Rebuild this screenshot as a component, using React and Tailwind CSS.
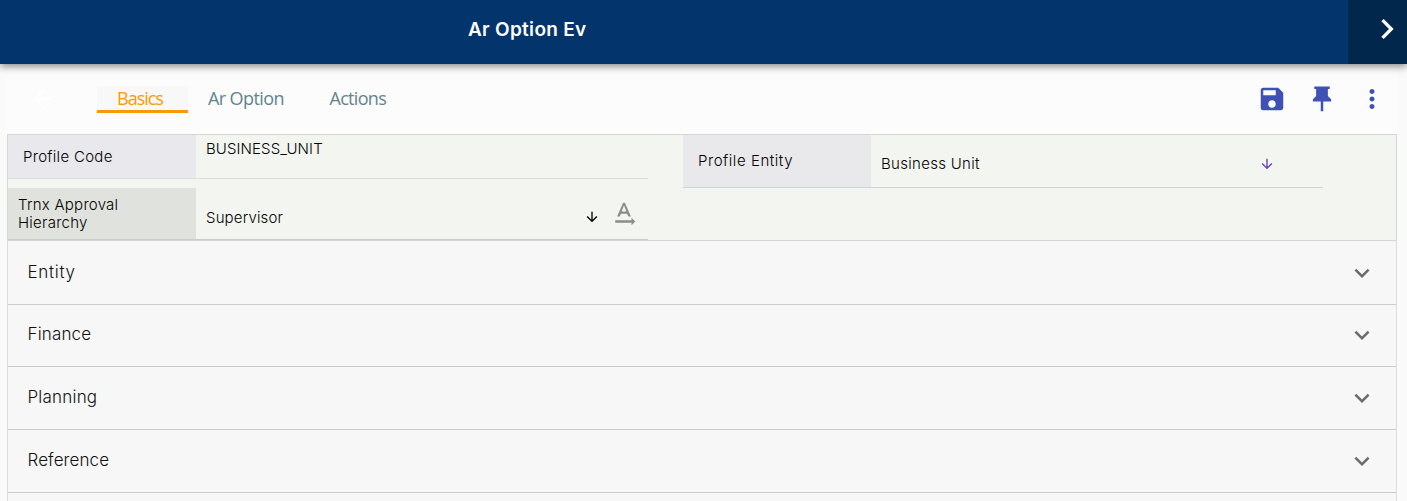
import React from "react";

function Mdi({ d, className }) {
  return (
    <svg viewBox="0 0 24 24" className={className} fill="currentColor">
      <path d={d} />
    </svg>
  );
}

const icons = {
  save: "M17 3H5a2 2 0 0 0-2 2v14a2 2 0 0 0 2 2h14c1.1 0 2-.9 2-2V7l-4-4zm-5 16c-1.66 0-3-1.34-3-3s1.34-3 3-3 3 1.34 3 3-1.34 3-3 3zm3-10H5V5h10v4z",
  pin: "M5.8 2H18.2V4H16.7V9.6L19.3 12.2V14H13V21.8H11V14H4.7V12.2L7.3 9.6V4H5.8z",
  more: "M12 8c1.1 0 2-.9 2-2s-.9-2-2-2-2 .9-2 2 .9 2 2 2zm0 2c-1.1 0-2 .9-2 2s.9 2 2 2 2-.9 2-2-.9-2-2-2zm0 6c-1.1 0-2 .9-2 2s.9 2 2 2 2-.9 2-2-.9-2-2-2z",
  back: "M20 11H7.83l5.59-5.59L12 4l-8 8 8 8 1.41-1.41L7.83 13H20v-2z",
  down: "M20 12l-1.41-1.41L13 16.17V4h-2v12.17l-5.58-5.59L4 12l8 8 8-8z",
  right: "M10 6 8.59 7.41 13.17 12l-4.58 4.59L10 18l6-6z",
  expand: "M16.59 8.59 12 13.17 7.41 8.59 6 10l6 6 6-6z",
  textRotation: "M21 18l-3-3v2H5v2h13v2l3-3zM9.5 11.8h5l.9 2.2h2.1L12.75 3h-1.5L6.5 14h2.1l.9-2.2zM12 4.98L13.87 10h-3.74L12 4.98z",
};

function Section({ title, size, tracking }) {
  return (
    <div className={`${size} flex shrink-0 items-center justify-between border-b border-[#cbcbcb] pl-[19.5px] pr-[19px]`}>
      <span className={`${tracking} text-[17px] font-light text-[#111]`}>{title}</span>
      <Mdi d={icons.expand} className="size-[30px] text-[#6c6c6c]" />
    </div>
  );
}

export default function App() {
  return (
    <div className="flex h-[501px] w-[1407px] flex-col overflow-hidden bg-[#fafafa] font-['Inter','Liberation_Sans',sans-serif] text-black">
      <header className="relative flex h-16 shrink-0 justify-between bg-[#03346c] text-white shadow-[0_2px_8px_rgba(0,0,0,0.5)]">
        <h1 className="pl-[468px] pt-[14px] text-[19px] font-semibold leading-[31px] tracking-[0.3px]">Ar Option Ev</h1>
        <div className="flex w-[59px] justify-end overflow-hidden bg-[#02274d] pt-[9px]">
          <Mdi d={icons.right} className="size-[40px]" />
        </div>
      </header>

      <main className="ml-[7px] flex w-[1390px] grow flex-col">
        <div className="flex h-[70px] shrink-0 items-center bg-[#fcfcfc]">
          <Mdi d={icons.back} className="ml-[21px] size-[30px] text-white" />
          <nav className="ml-[39px] flex font-['Open_Sans','Noto_Sans',sans-serif] text-[18px] leading-[24px] text-[#628391]">
            <span className="h-[27px] w-[91px] border-b-[3px] border-[#ff9800] bg-[#f8f8f8] pl-[20px] tracking-[-1px] text-[#ff9800]">Basics</span>
            <span className="w-[122px] pl-[20px] tracking-[-0.6px]">Ar Option</span>
            <span className="pl-[19.5px] tracking-[-0.7px]">Actions</span>
          </nav>
          <div className="ml-auto flex gap-5 pr-[10px] text-[#3f51b5]">
            <Mdi d={icons.save} className="size-[30px]" />
            <Mdi d={icons.pin} className="size-[30px]" />
            <Mdi d={icons.more} className="size-[30px]" />
          </div>
        </div>

        <section className="flex h-[107px] shrink-0 border border-[#d5d8d2] bg-[#f3f5f0] text-[15px] font-light leading-[18px]">
          <div className="flex w-[640px] flex-col justify-between">
            <div className="flex h-[44px] border-b border-[#d7e0df]">
              <div className="w-[188px] bg-[#e9e8ed] pl-[15px] pt-[13px] tracking-[0.3px]">Profile Code</div>
              <div className="pl-[10px] pt-[5px] tracking-[0.1px]">BUSINESS_UNIT</div>
            </div>
            <div className="flex h-[52px] border-b border-[#c8cfcd]">
              <div className="w-[188px] bg-[#e0e2dd] pl-[10px] pt-[8px] tracking-[0.25px]">Trnx Approval<br />Hierarchy</div>
              <div className="pl-[10px] pt-[21px] tracking-[0.15px]">Supervisor</div>
              <Mdi d={icons.down} className="ml-auto mt-[21px] size-[16px] text-black" />
              <Mdi d={icons.textRotation} className="ml-[9.5px] mr-[9px] mt-[11px] size-[30px] text-[#8b8d89]" />
            </div>
          </div>
          <div className="ml-[35px] flex h-[53px] w-[640px] border-b border-[#ccd6d8]">
            <div className="w-[188px] bg-[#e9e8eb] pl-[15px] pt-[17px] tracking-[0.55px]">Profile Entity</div>
            <div className="pl-[10px] pt-[20px] tracking-[0.3px]">Business Unit</div>
            <Mdi d={icons.down} className="ml-auto mr-[48.5px] mt-[21px] size-[16px] text-[#6a3ac4]" />
          </div>
        </section>

        <div className="flex grow flex-col border-x border-[#dddddd] bg-[#f7f7f7]">
          <Section title="Entity" size="h-[64px]" tracking="tracking-[0.7px]" />
          <Section title="Finance" size="h-[62px] pb-px" tracking="tracking-[0.15px]" />
          <Section title="Planning" size="h-[63px]" tracking="tracking-[0.2px]" />
          <Section title="Reference" size="h-[63px]" tracking="tracking-[0.1px]" />
        </div>
      </main>
    </div>
  );
}
